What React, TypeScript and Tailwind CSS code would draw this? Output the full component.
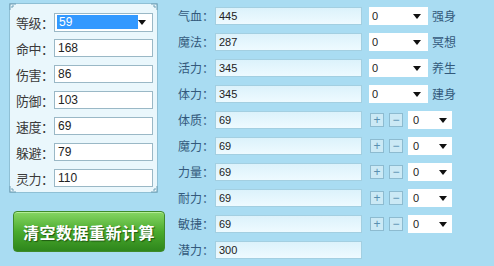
import React from "react";

const cjk = { fontFamily: '"Noto Sans CJK SC", "Noto Sans", sans-serif' };
const num = { fontFamily: '"Liberation Sans", Arial, sans-serif' };

function Arrow() {
  return (
    <svg width="8" height="5" viewBox="0 0 8 5" className="shrink-0">
      <path d="M0 0 H8 L4 5 Z" fill="#111" />
    </svg>
  );
}

function Corner({ className }: { className: string }) {
  return (
    <svg width="8" height="8" viewBox="0 0 8 8" className={"absolute " + className}>
      <path d="M1 7 V1 H7 M3 5 V3 H5" stroke="#6e9fb6" strokeWidth="1" fill="none" />
    </svg>
  );
}

const leftRows = [
  ["命中", "168"],
  ["伤害", "86"],
  ["防御", "103"],
  ["速度", "69"],
  ["躲避", "79"],
  ["灵力", "110"],
];

const topRows = [
  ["气血", "445", "强身"],
  ["魔法", "287", "冥想"],
  ["活力", "345", "养生"],
  ["体力", "345", "建身"],
];

const pointRows = [
  ["体质", "69"],
  ["魔力", "69"],
  ["力量", "69"],
  ["耐力", "69"],
  ["敏捷", "69"],
];

function StepBtn({ sign }: { sign: string }) {
  return (
    <div className="flex h-[14px] w-[14px] items-center justify-center border border-[#8dbbd0] bg-[#cbe9f5] text-[12px] leading-none text-[#5a8fb0]" style={num}>
      {sign}
    </div>
  );
}

function Field({ value }: { value: string }) {
  return (
    <div className="flex h-[18px] w-[147px] shrink-0 items-center border border-[#a3cfe1] bg-gradient-to-b from-[#dcf2fb] to-[#eefaff] pl-[3px] text-[11px] text-[#222]" style={num}>
      {value}
    </div>
  );
}

function LeftLabel({ children }: { children: React.ReactNode }) {
  return (
    <span className="w-[44px] shrink-0 whitespace-nowrap pl-[6px] text-[13px] leading-none tracking-[-0.5px] text-[#3a3a3a]" style={cjk}>
      {children}
    </span>
  );
}

function RightLabel({ children }: { children: React.ReactNode }) {
  return (
    <span className="w-[37px] shrink-0 whitespace-nowrap text-[12px] leading-none text-[#33597b]" style={cjk}>
      {children}
    </span>
  );
}

export default function App() {
  return (
    <div className="flex h-[266px] w-[494px] overflow-hidden bg-[#a9dcf2]">
      {/* 左侧面板 */}
      <div className="flex w-[170px] shrink-0 flex-col pl-[9px] pt-[3px]">
        <div className="relative h-[190px] w-[149px] border border-[#8fc0d5] bg-[#eaf7fc] pt-[9px]">
          <Corner className="-left-[1px] -top-[1px]" />
          <Corner className="-right-[1px] -top-[1px] rotate-90" />
          <Corner className="-bottom-[1px] -left-[1px] -rotate-90" />
          <Corner className="-bottom-[1px] -right-[1px] rotate-180" />
          <div className="flex flex-col gap-[8px]">
            <div className="flex h-[18px] items-center">
              <LeftLabel>等级：</LeftLabel>
              <div className="flex h-[19px] w-[99px] shrink-0 items-center border border-[#9ab8c6] bg-white pl-[2px] pr-[6px]">
                <div className="flex h-[14px] w-[82px] items-center bg-[#3399ff] pl-[2px] text-[12px] text-white" style={num}>59</div>
                <div className="flex flex-1 justify-end"><Arrow /></div>
              </div>
            </div>
            {leftRows.map(([label, v]) => (
              <div key={label} className="flex h-[18px] items-center">
                <LeftLabel>{label}：</LeftLabel>
                <div className="flex h-[18px] w-[99px] shrink-0 items-center border border-[#9ab8c6] bg-white pl-[3px] text-[12px] text-[#222]" style={num}>
                  {v}
                </div>
              </div>
            ))}
          </div>
        </div>
        <button
          className="ml-[4px] mt-[18px] flex h-[41px] w-[152px] items-center justify-center rounded-[4px] border border-[#3f8a2a] bg-gradient-to-b from-[#86d663] via-[#4aab2d] to-[#2e861c] text-[16px] font-bold tracking-[0.5px] text-white shadow-[inset_0_1px_0_#b3ec97]"
          style={{ ...cjk, textShadow: "1px 1px 1px #1f5a12" }}
        >
          清空数据重新计算
        </button>
      </div>

      {/* 右侧属性 */}
      <div className="flex flex-col gap-[8px] pl-[8px] pt-[7px]">
        {topRows.map(([label, v, tail]) => (
          <div key={label} className="flex h-[18px] items-center">
            <RightLabel>{label}：</RightLabel>
            <Field value={v} />
            <div className="ml-[7px] flex h-[18px] w-[59px] items-center justify-between bg-white pl-[3px] pr-[7px] text-[11px] text-[#222]" style={num}>
              0<Arrow />
            </div>
            <span className="ml-[4px] text-[12px] leading-none text-[#33597b]" style={cjk}>{tail}</span>
          </div>
        ))}
        {pointRows.map(([label, v]) => (
          <div key={label} className="flex h-[18px] items-center">
            <RightLabel>{label}：</RightLabel>
            <Field value={v} />
            <div className="ml-[8px] flex items-center gap-[5px]">
              <StepBtn sign="+" />
              <StepBtn sign="−" />
            </div>
            <div className="ml-[5px] flex h-[18px] w-[44px] items-center justify-between bg-white pl-[5px] pr-[5px] text-[11px] text-[#222]" style={num}>
              0<Arrow />
            </div>
          </div>
        ))}
        <div className="flex h-[18px] items-center">
          <RightLabel>潜力：</RightLabel>
          <Field value="300" />
        </div>
      </div>
    </div>
  );
}
